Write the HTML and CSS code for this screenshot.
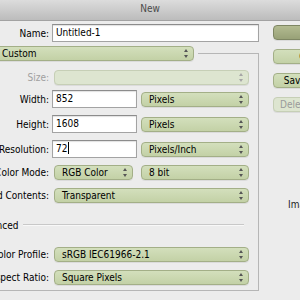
FILE: index.html
```html
<!DOCTYPE html>
<html lang="en">
<head>
  <meta charset="UTF-8" />
  <title>New</title>
  <link rel="stylesheet" href="styles.css">
</head>
<body>

  <div class="window">
    <div class="titlebar">New</div>

    <div class="content">
      <div class="main">
        <div class="row name-row">
          <label>Name:</label>
          <div class="field">Untitled-1</div>
        </div>

        <fieldset class="group">
          <legend><div class="popup preset">Custom</div></legend>

          <div class="row size-row disabled">
            <label>Size:</label>
            <div class="popup"></div>
          </div>

          <div class="row">
            <label>Width:</label>
            <div class="pair">
              <div class="field">852</div>
              <div class="popup">Pixels</div>
            </div>
          </div>

          <div class="row">
            <label>Height:</label>
            <div class="pair">
              <div class="field">1608</div>
              <div class="popup">Pixels</div>
            </div>
          </div>

          <div class="row">
            <label>Resolution:</label>
            <div class="pair">
              <div class="field">72<span class="caret"></span></div>
              <div class="popup">Pixels/Inch</div>
            </div>
          </div>

          <div class="row">
            <label>Color Mode:</label>
            <div class="pair">
              <div class="popup mode">RGB Color</div>
              <div class="popup">8 bit</div>
            </div>
          </div>

          <div class="row bg-row">
            <label>Background Contents:</label>
            <div class="popup">Transparent</div>
          </div>

          <div class="advanced">
            <span class="disclosure"></span>
            <span>Advanced</span>
            <span class="rule"></span>
          </div>

          <div class="row">
            <label>Color Profile:</label>
            <div class="popup">sRGB IEC61966-2.1</div>
          </div>

          <div class="row aspect-row">
            <label>Pixel Aspect Ratio:</label>
            <div class="popup">Square Pixels</div>
          </div>
        </fieldset>
      </div>

      <div class="side">
        <button class="btn default">OK</button>
        <button class="btn">Cancel</button>
        <button class="btn">Save Preset...</button>
        <button class="btn" disabled>Delete Preset...</button>

        <div class="info">Image Size:</div>
      </div>
    </div>
  </div>

</body>
</html>
```

FILE: styles.css
```css
:root {
  --window-bg: #ececec;
  --pop-border: #a3af87;
  --pop-top: #d3dfbc;
  --pop-bottom: #c3d1a6;
  --text-color: #000;
}

* {
  box-sizing: border-box;
}

body {
  margin: 0;
  background: var(--window-bg);
  font-family: "DejaVu Sans Condensed", "DejaVu Sans", sans-serif;
  font-stretch: condensed;
  font-size: 10px;
  color: var(--text-color);
  overflow: hidden;
}

.window {
  width: 300px;
  height: 300px;
  overflow: hidden;
}

.titlebar {
  height: 21px;
  padding-top: 2px;
  line-height: 13px;
  text-align: center;
  color: #4a4a4a;
  background: linear-gradient(#dcdcdc, #bcbcbc);
  border-bottom: 1px solid #a2a2a2;
}

.content {
  display: flex;
  padding-top: 3px;
}

.main {
  flex: none;
  width: 299px;
  margin-left: -40px;
}

/* label column + control column */
.row {
  display: grid;
  grid-template-columns: 88px 1fr;
  column-gap: 3px;
  align-items: center;
}

/* long labels run out to the left, like the dialog */
.row label {
  display: flex;
  justify-content: flex-end;
  white-space: nowrap;
}

.name-row {
  margin-left: 1px;
}

.row > .popup {
  margin-left: 2px;
}

.disabled label {
  color: #a0a0a0;
}

.pair {
  display: grid;
  grid-template-columns: 85px 1fr;
  column-gap: 4px;
  align-items: center;
}

.pair .mode {
  margin: 0 4px 0 2px;
}

.field {
  height: 18px;
  padding-left: 3px;
  line-height: 16px;
  background: #fff;
  border: 1px solid #a3a3a3;
  border-top-color: #8c8c8c;
  box-shadow: inset 0 1px 1px rgba(0, 0, 0, 0.12);
  white-space: nowrap;
}

.caret {
  display: inline-block;
  width: 1px;
  height: 12px;
  margin-left: 1px;
  vertical-align: -2px;
  background: #000;
}

.popup {
  position: relative;
  height: 15px;
  padding-left: 7px;
  line-height: 13px;
  border: 1px solid var(--pop-border);
  border-radius: 4px;
  background: linear-gradient(var(--pop-top), var(--pop-bottom));
  box-shadow: 0 1px 0 rgba(0, 0, 0, 0.07);
  white-space: nowrap;
}

/* up / down arrows */
.popup::before,
.popup::after {
  content: "";
  position: absolute;
  right: 5px;
  border-left: 2px solid transparent;
  border-right: 2px solid transparent;
}

.popup::before {
  top: 2px;
  border-bottom: 3px solid #555;
}

.popup::after {
  bottom: 2px;
  border-top: 3px solid #555;
}

.disabled .popup {
  border-color: #c6cfb6;
  background: #dde5d0;
}

.disabled .popup::before {
  border-bottom-color: #a6a6a6;
}

.disabled .popup::after {
  border-top-color: #a6a6a6;
}

.group {
  display: flex;
  flex-direction: column;
  gap: 7px;
  margin: 4px 0 0;
  padding: 9px 9px 5px 0;
  border: 1px solid #b6b6b6;
  min-width: 0;
}

.group legend {
  margin-left: 29px;
  padding: 0 4px;
}

.preset {
  width: 200px;
}

.size-row {
  margin-bottom: -2px;
}

.bg-row,
.aspect-row {
  margin-top: 1px;
}

.advanced {
  display: flex;
  align-items: center;
  gap: 4px;
  height: 30px;
  margin-left: 3px;
  padding-right: 5px;
}

.disclosure {
  width: 0;
  height: 0;
  border-left: 3px solid transparent;
  border-right: 3px solid transparent;
  border-top: 5px solid #666;
}

.rule {
  flex: 1;
  height: 2px;
  margin-left: 1px;
  border-top: 1px solid #c8c8c8;
  border-bottom: 1px solid #f8f8f8;
}

.side {
  flex: none;
  display: flex;
  flex-direction: column;
  gap: 9px;
  margin-left: 14px;
  padding-top: 1px;
}

.btn {
  width: 83px;
  height: 15px;
  padding: 0;
  font: inherit;
  line-height: 13px;
  color: #000;
  border: 1px solid var(--pop-border);
  border-radius: 4px;
  background: linear-gradient(var(--pop-top), var(--pop-bottom));
  box-shadow: 0 1px 0 rgba(0, 0, 0, 0.07);
}

.btn.default {
  border-color: #7e8663;
  background: linear-gradient(#b3bb91, #98a177);
}

.btn:disabled {
  color: #9a9a9a;
  border-color: #c6cfb6;
  background: #dde5d0;
}

.info {
  margin-top: 78px;
  margin-left: 15px;
  color: #222;
  white-space: nowrap;
}
```
